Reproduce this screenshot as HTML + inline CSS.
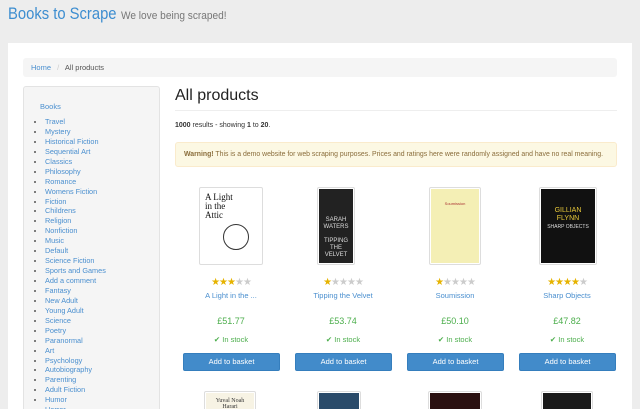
<!DOCTYPE html>
<html><head><meta charset="utf-8"><style>
*{margin:0;padding:0;box-sizing:border-box}
html,body{width:640px;height:409px;overflow:hidden}
body{background:#ededed;font-family:"Liberation Sans",sans-serif;position:relative}
.a{position:absolute}
a{color:#337ab7;text-decoration:none}
#hd1{left:8px;top:4px;font-size:17px;color:#3c8dd0;transform:scaleX(0.87);transform-origin:left top;white-space:nowrap}
#hd2{left:121px;top:10px;font-size:11px;color:#777;transform:scaleX(0.92);transform-origin:left top;white-space:nowrap}
#wrap{left:8px;top:43px;width:624px;height:370px;background:#fff}
#bc{left:23px;top:58px;width:594px;height:19px;background:#f5f5f5;border-radius:3px;font-size:7.5px;padding:5px 8px;color:#555}
#side{left:23px;top:86px;width:137px;height:340px;background:#f5f5f5;border:1px solid #e3e3e3;border-radius:3px}
#side .b{position:absolute;left:16px;top:15px;font-size:7.5px;color:#4a8fcf}
#side ul{position:absolute;left:12px;top:30px;font-size:7.3px;line-height:9.93px;list-style:disc;color:#555;padding-left:9px}
#side li a{color:#4a8fcf}
#h1{left:175px;top:87px;font-size:16px;color:#222}
#hr{left:175px;top:110px;width:442px;height:1px;background:#eee}
#res{left:175px;top:122px;font-size:7px;color:#333}
#warn{left:175px;top:142px;width:442px;height:25px;background:#fcf8e3;border:1px solid #faebcc;border-radius:3px;font-size:6.9px;color:#8a6d3b;padding:7.5px 8px;white-space:nowrap}
.p{position:absolute;width:112px;text-align:center}
.img{position:absolute;border:1px solid #ddd;border-radius:2px;padding:1px;background:#fff}
.stars{position:absolute;top:90px;left:0;width:100%;font-size:10px;letter-spacing:-1px;color:#ccc}
.stars b{color:#e6b300;font-weight:normal}
.t{position:absolute;top:104px;width:100%;font-size:7.5px;color:#4a8fcf}
.pr{position:absolute;top:129px;width:100%;font-size:9px;color:#4cae4c}
.st{position:absolute;top:148px;width:100%;font-size:7.5px;color:#4cae4c}
.btn{position:absolute;top:166px;left:8px;width:97px;height:18px;background:#428bca;border:1px solid #357ebd;border-radius:2px;color:#fff;font-size:7.5px;line-height:16px}
</style></head><body>
<div class="a" id="hd1">Books to Scrape</div>
<div class="a" id="hd2">We love being scraped!</div>
<div class="a" id="wrap"></div>
<div class="a" id="bc"><a style="color:#4a8fcf">Home</a> <span style="color:#ccc;padding:0 4px">/</span> All products</div>
<div class="a" id="side"><div class="b">Books</div><ul>
<li><a>Travel</a></li><li><a>Mystery</a></li><li><a>Historical Fiction</a></li><li><a>Sequential Art</a></li><li><a>Classics</a></li><li><a>Philosophy</a></li><li><a>Romance</a></li><li><a>Womens Fiction</a></li><li><a>Fiction</a></li><li><a>Childrens</a></li><li><a>Religion</a></li><li><a>Nonfiction</a></li><li><a>Music</a></li><li><a>Default</a></li><li><a>Science Fiction</a></li><li><a>Sports and Games</a></li><li><a>Add a comment</a></li><li><a>Fantasy</a></li><li><a>New Adult</a></li><li><a>Young Adult</a></li><li><a>Science</a></li><li><a>Poetry</a></li><li><a>Paranormal</a></li><li><a>Art</a></li><li><a>Psychology</a></li><li><a>Autobiography</a></li><li><a>Parenting</a></li><li><a>Adult Fiction</a></li><li><a>Humor</a></li><li><a>Horror</a></li></ul></div>
<div class="a" id="h1">All products</div>
<div class="a" id="hr"></div>
<div class="a" id="res"><b>1000</b> results - showing <b>1</b> to <b>20</b>.</div>
<div class="a" id="warn"><b>Warning!</b> This is a demo website for web scraping purposes. Prices and ratings here were randomly assigned and have no real meaning.</div>

<div class="p" style="left:175px;top:187px">
<div class="img" style="left:24px;top:0;width:64px;height:78px"><div style="width:100%;height:100%;background:#fff;font-family:'Liberation Serif',serif;font-size:9px;text-align:left;padding:4px;line-height:9px;color:#111">A Light<br>in the<br>Attic<div style="width:26px;height:26px;border:1px solid #333;border-radius:50%;margin:4px 0 0 18px"></div></div></div>
<div class="stars"><b>★★★</b>★★</div><div class="t">A Light in the ...</div><div class="pr">£51.77</div><div class="st">✔ In stock</div><div class="btn">Add to basket</div></div>

<div class="p" style="left:287px;top:187px">
<div class="img" style="left:30px;top:0;width:38px;height:78px"><div style="width:100%;height:100%;background:#222;color:#ddd;font-size:6px;padding-top:28px;line-height:7px">SARAH<br>WATERS<br><br>TIPPING<br>THE VELVET</div></div>
<div class="stars"><b>★</b>★★★★</div><div class="t">Tipping the Velvet</div><div class="pr">£53.74</div><div class="st">✔ In stock</div><div class="btn">Add to basket</div></div>

<div class="p" style="left:399px;top:187px">
<div class="img" style="left:30px;top:0;width:52px;height:78px"><div style="width:100%;height:100%;background:#f4efb5;color:#a33;font-size:4px;padding-top:12px">Soumission</div></div>
<div class="stars"><b>★</b>★★★★</div><div class="t">Soumission</div><div class="pr">£50.10</div><div class="st">✔ In stock</div><div class="btn">Add to basket</div></div>

<div class="p" style="left:511px;top:187px">
<div class="img" style="left:28px;top:0;width:58px;height:78px"><div style="width:100%;height:100%;background:#111;color:#e8c93a;font-size:7px;padding-top:18px;line-height:8px">GILLIAN<br>FLYNN<br><span style="color:#ddd;font-size:5px">SHARP OBJECTS</span></div></div>
<div class="stars"><b>★★★★</b>★</div><div class="t">Sharp Objects</div><div class="pr">£47.82</div><div class="st">✔ In stock</div><div class="btn">Add to basket</div></div>

<div class="img a" style="left:204px;top:391px;width:52px;height:30px"><div style="width:100%;height:100%;background:#f7f3e4;font-family:'Liberation Serif',serif;font-size:6px;text-align:center;padding-top:5px;color:#333">Yuval Noah<br>Harari</div></div>
<div class="img a" style="left:317px;top:391px;width:44px;height:30px"><div style="width:100%;height:100%;background:#2a4b6a"></div></div>
<div class="img a" style="left:428px;top:391px;width:54px;height:30px"><div style="width:100%;height:100%;background:#2a1010"></div></div>
<div class="img a" style="left:541px;top:391px;width:52px;height:30px"><div style="width:100%;height:100%;background:#1a1a1a"></div></div>
</body></html>
